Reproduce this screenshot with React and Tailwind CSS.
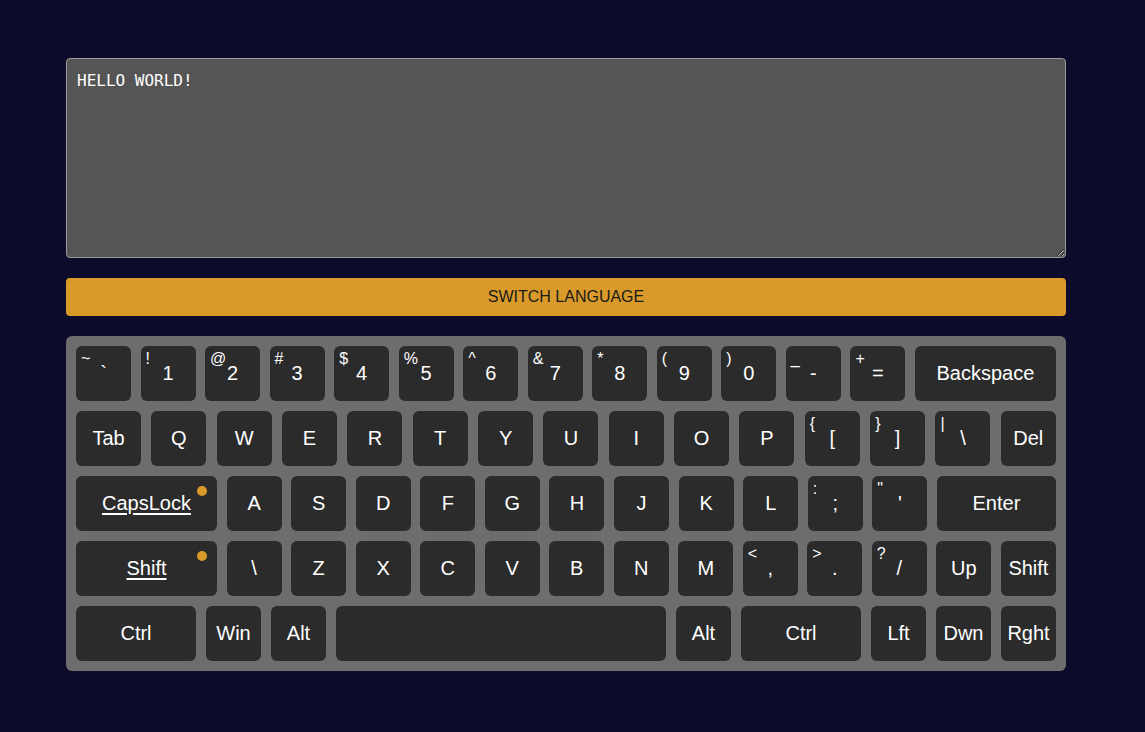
import React, { useEffect, useRef } from 'react';

// keyboard rows: [label, shiftLabel, width, extra]
const rows = [
  [
    ['`', '~'], ['1', '!'], ['2', '@'], ['3', '#'], ['4', '$'], ['5', '%'], ['6', '^'],
    ['7', '&'], ['8', '*'], ['9', '('], ['0', ')'], ['-', '_'], ['=', '+'],
    ['Backspace', null, 141],
  ],
  [
    ['Tab', null, 65], ['Q'], ['W'], ['E'], ['R'], ['T'], ['Y'], ['U'], ['I'], ['O'], ['P'],
    ['[', '{'], [']', '}'], ['\\', '|'], ['Del'],
  ],
  [
    ['CapsLock', null, 141, 'toggle'], ['A'], ['S'], ['D'], ['F'], ['G'], ['H'], ['J'], ['K'], ['L'],
    [';', ':'], ["'", '"'], ['Enter', null, 119],
  ],
  [
    ['Shift', null, 141, 'toggle'], ['\\'], ['Z'], ['X'], ['C'], ['V'], ['B'], ['N'], ['M'],
    [',', '<'], ['.', '>'], ['/', '?'], ['Up'], ['Shift'],
  ],
  [
    ['Ctrl', null, 120], ['Win'], ['Alt'], ['', null, 330], ['Alt'], ['Ctrl', null, 120],
    ['Lft'], ['Dwn'], ['Rght'],
  ],
];

const Key = ({ label, shift, width = 55, extra }) => {
  return (
    <div
      className="relative flex items-center justify-center h-[55px] pb-[2px] rounded-[6px] bg-[#2b2b2b] text-white text-[20px]"
      style={{ width }}
    >
      {shift && (
        <span className="absolute top-[5px] left-[5px] text-[16px] leading-none">{shift}</span>
      )}
      <span className={extra === 'toggle' ? 'underline underline-offset-[3px]' : ''}>{label}</span>
      {extra === 'toggle' && (
        <span className="absolute top-[10px] right-[10px] w-[10px] h-[10px] rounded-full bg-[#d99a2a]" />
      )}
    </div>
  );
};

const App = () => {
  const areaRef = useRef(null);

  useEffect(() => {
    const el = areaRef.current;
    if (el) {
      el.focus();
      el.setSelectionRange(el.value.length, el.value.length);
    }
  }, []);

  return (
    <div
      className="min-h-screen bg-[#0d0b2a] pl-[66px] pt-[58px]"
      style={{ fontFamily: '"Liberation Sans", Arial, sans-serif' }}
    >
      <div className="flex flex-col gap-5 w-[1000px]">
        <textarea
          ref={areaRef}
          defaultValue="HELLO WORLD!"
          className="block w-full h-[200px] rounded-[4px] border border-[#9a9a9a] bg-[#555555] text-white text-[16px] px-[10px] py-[10px] outline-none caret-white"
          style={{ fontFamily: '"DejaVu Sans Mono", monospace' }}
        />
        <button className="h-[38px] w-full rounded-[4px] bg-[#d99a2a] text-[16px] text-[#1a1a1a]">
          SWITCH LANGUAGE
        </button>
        <div className="flex flex-col gap-[10px] p-[10px] rounded-[6px] bg-[#6d6d6d]">
          {rows.map((row, i) => (
            <div key={i} className="flex justify-between">
              {row.map(([label, shift, width, extra], j) => (
                <Key key={j} label={label} shift={shift} width={width} extra={extra} />
              ))}
            </div>
          ))}
        </div>
      </div>
    </div>
  );
};

export default App;
